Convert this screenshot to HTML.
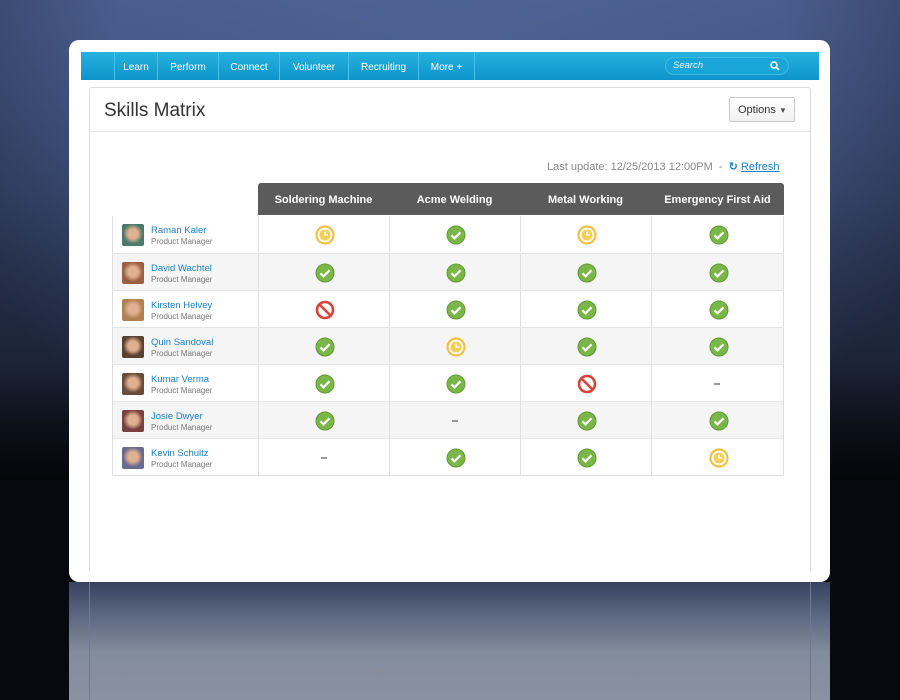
<!DOCTYPE html>
<html><head><meta charset="utf-8"><style>
*{margin:0;padding:0;box-sizing:border-box}
body{width:900px;height:700px;overflow:hidden;position:relative;font-family:"Liberation Sans","DejaVu Sans",sans-serif;background:#07090e}
.bg{position:absolute;left:0;top:0;width:900px;height:480px;background:linear-gradient(#4a5d8e 0%,#3d4e78 40%,#2c3858 75%,#141a28 88%,#07090e 100%)}
.vig{position:absolute;left:0;top:0;width:900px;height:480px;background:radial-gradient(ellipse 560px 420px at 450px 60px,rgba(90,110,160,0.35) 0%,rgba(0,0,0,0) 60%,rgba(0,0,0,0.35) 100%)}
.refl{position:absolute;left:69px;top:582px;width:761px;height:118px;background:linear-gradient(#36425e 0%,#5e6a82 30%,#838c9c 60%,#8a92a2 100%)}
.refl .in{position:absolute;left:20px;top:0;width:722px;height:118px;border-left:1px solid #6f7890;border-right:1px solid #6f7890}
.card{position:absolute;left:69px;top:40px;width:761px;height:542px;background:#fff;border-radius:10px}
.nav{position:absolute;left:81px;top:52px;width:738px;height:28px;background:linear-gradient(#25b3e0,#0e93c9);}
.nav span{position:absolute;top:0;height:28px;line-height:31px;color:#fff;font-size:10px;text-align:center;border-left:1px solid #4cc0e6}
.search{position:absolute;left:665px;top:57px;width:124px;height:18px;border-radius:9px;background:#1aa5d8;border:1px solid #3cb9e3;color:#e6f6fc;font-size:9.5px;font-style:italic;padding-left:7px;line-height:16px}
.panel{position:absolute;left:89px;top:87px;width:722px;height:484px;border:1px solid #dcdcdc;border-bottom:none;border-radius:3px 3px 0 0}
.title{position:absolute;left:104px;top:100px;font-size:19px;color:#333}
.hline{position:absolute;left:90px;top:131px;width:720px;height:1px;background:#e2e2e2}
.opt{position:absolute;left:729px;top:97px;width:66px;height:25px;border:1px solid #c8c8c8;border-radius:2px;background:linear-gradient(#fff,#f1f1f1);font-size:11px;color:#333;line-height:24px;padding-left:8px}
.upd{position:absolute;left:547px;top:160px;font-size:11px;color:#888}
.upd a{color:#1a7fc1;text-decoration:underline}
.th{position:absolute;top:183px;height:32px;background:#5b5b5b;color:#fff;font-size:11px;font-weight:bold;text-align:center;line-height:35px}
.tbl{position:absolute;left:112px;top:216px;width:672px;height:260px;border:1px solid #dedede}
.row{position:absolute;left:0;width:670px;height:37px;border-top:1px solid #e4e4e4}
.cell{position:absolute;top:0;height:36px;border-left:1px solid #e0e0e0}
.av{position:absolute;left:9px;top:8px;width:22px;height:22px;border-radius:2px}
.nm{position:absolute;left:38px;top:9px;font-size:9.5px;color:#1a7fc1}
.pm{position:absolute;left:38px;top:21px;font-size:8px;color:#777}
.ic{position:absolute;top:9px;width:20px;height:20px}
</style></head><body>
<div class="bg"></div><div class="vig"></div>
<div class="refl"><div class="in"></div></div>
<div class="card"></div>
<div class="nav">
<span style="left:33px;width:43px">Learn</span>
<span style="left:76px;width:61px">Perform</span>
<span style="left:137px;width:61px">Connect</span>
<span style="left:198px;width:69px">Volunteer</span>
<span style="left:267px;width:70px">Recruiting</span>
<span style="left:337px;width:57px;border-right:1px solid #4cc0e6">More +</span>
</div>
<div class="search">Search<svg style="position:absolute;right:8px;top:3px" width="10" height="10" viewBox="0 0 10 10"><circle cx="4" cy="4" r="3" fill="none" stroke="#fff" stroke-width="1.5"/><path d="M6 6L9 9" stroke="#fff" stroke-width="1.6"/></svg></div>
<div class="panel"></div>
<div class="title">Skills Matrix</div>
<div class="hline"></div>
<div class="opt">Options <span style="font-size:8px;color:#555">▼</span></div>
<div class="upd">Last update: 12/25/2013 12:00PM &nbsp;- &nbsp;<span style="color:#1a7fc1;font-weight:bold">↻</span> <a>Refresh</a></div>
<div class="th" style="left:258px;width:131px;border-radius:3px 0 0 0">Soldering Machine</div>
<div class="th" style="left:389px;width:131px">Acme Welding</div>
<div class="th" style="left:520px;width:131px">Metal Working</div>
<div class="th" style="left:651px;width:133px;border-radius:0 3px 0 0">Emergency First Aid</div>
<div class="tbl" id="t"></div>
<script>
var C='<svg class="ic" viewBox="0 0 20 20"><circle cx="10" cy="10" r="9" fill="#7ab648"/><circle cx="10" cy="10" r="9" fill="none" stroke="#5f9a35" stroke-width="1"/><path d="M5.5 10.3l3 3 6-6" fill="none" stroke="#fff" stroke-width="2.2"/></svg>';
var K='<svg class="ic" viewBox="0 0 20 20"><circle cx="10" cy="10" r="8.5" fill="#fff" stroke="#f0c040" stroke-width="2.2"/><circle cx="10" cy="10" r="5.5" fill="#f5cf55"/><path d="M10 6.5V10h3" fill="none" stroke="#fff" stroke-width="1.5"/></svg>';
var N='<svg class="ic" viewBox="0 0 20 20"><circle cx="10" cy="10" r="8" fill="#fff" stroke="#d9443a" stroke-width="2.6"/><path d="M5 5l10 10" stroke="#d9443a" stroke-width="2.6"/></svg>';
var D='<div style="position:absolute;top:18px;left:62px;width:6px;height:2px;background:#999"></div>';
var names=["Raman Kaler","David Wachtel","Kirsten Helvey","Quin Sandoval","Kumar Verma","Josie Dwyer","Kevin Schultz"];
var av=["#4a7a6a","#9a6040","#b08050","#5a4030","#6a4a3a","#7a4040","#6a6a90"];
var d=[[K,C,K,C],[C,C,C,C],[N,C,C,C],[C,K,C,C],[C,C,N,D],[C,D,C,C],[D,C,C,K]];
var L=[145,276,407,538],W=[131,131,131,133],h='';
for(var i=0;i<7;i++){h+='<div class="row" style="top:'+(i*37-1)+'px;background:'+(i%2?'#f5f5f5':'#fff')+';'+(i==0?'border-top:none':'')+'">';
h+='<div class="av" style="background:radial-gradient(circle at 50% 45%,#e0b090 30%,'+av[i]+' 60%)"></div><div class="nm">'+names[i]+'</div><div class="pm">Product Manager</div>';
for(var j=0;j<4;j++){var x=d[i][j];h+='<div class="cell" style="left:'+L[j]+'px;width:'+W[j]+'px">'+(x==D?x:x.replace('class="ic"','class="ic" style="left:'+(W[j]/2-10)+'px"'))+'</div>';}
h+='</div>';}
document.getElementById('t').innerHTML=h;
</script>
</body></html>
